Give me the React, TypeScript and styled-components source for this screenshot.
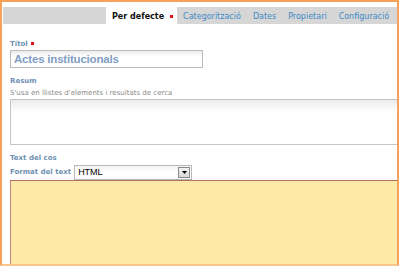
import styled, { createGlobalStyle } from "styled-components";

const Global = createGlobalStyle`
  html, body {
    margin: 0;
    padding: 0;
    background: #ffffff;
  }
`;

const Frame = styled.div`
  width: 399px;
  height: 266px;
  box-sizing: border-box;
  border-top: 2px solid #f7a25a;
  border-left: 2px solid #f7a25a;
  border-right: 2px solid #f7a25a;
  border-bottom: 2px solid #f9c48e;
  overflow: hidden;
  font-family: "DejaVu Sans", Verdana, sans-serif;
`;

const TabBar = styled.div`
  margin: 5px 0 0 1px;
  height: 17px;
  background: #d6d6d6;
  display: flex;
  align-items: stretch;
  padding-left: 103px;
`;

const Tab = styled.div<{ $active?: boolean }>`
  display: flex;
  align-items: center;
  padding: ${(p) => (p.$active ? "1px 4px 0 6px" : "1px 6px 0 6px")};
  font-size: 8px;
  font-weight: ${(p) => (p.$active ? "bold" : "normal")};
  color: ${(p) => (p.$active ? "#111" : "#3f8ac6")};
  background: ${(p) => (p.$active ? "#ffffff" : "transparent")};
  white-space: nowrap;
`;

const Required = styled.span<{ $gap?: number }>`
  display: inline-block;
  width: 3px;
  height: 3px;
  background: #e01010;
  margin-left: ${(p) => p.$gap ?? 6}px;
`;

const Body = styled.div`
  padding: 14px 0 0 8px;
`;

const Label = styled.div`
  font-size: 7px;
  font-weight: bold;
  color: #6f8fb3;
  display: flex;
  align-items: center;
  height: 11px;
`;

const Help = styled.div`
  font-size: 7px;
  color: #8a8a8a;
  margin-top: 1.5px;
  height: 10px;
  line-height: 10px;
`;

const TitleInput = styled.div`
  margin-top: 1px;
  width: 193px;
  height: 18px;
  box-sizing: border-box;
  border: 1px solid #bcbcbc;
  background: linear-gradient(#ececec, #ffffff 40%);
  font-family: "Liberation Sans", Arial, sans-serif;
  font-weight: bold;
  font-size: 11.5px;
  letter-spacing: -0.2px;
  color: #819dc4;
  padding-left: 3px;
  display: flex;
  align-items: center;
`;

const Section = styled.div<{ $gap: number }>`
  margin-top: ${(p) => p.$gap}px;
`;

const TextArea = styled.div`
  margin-top: 1px;
  width: 400px;
  height: 46px;
  box-sizing: border-box;
  border: 1px solid #c4c4c4;
  background: linear-gradient(#ececec, #ffffff 30%);
`;

const FormatRow = styled.div`
  display: flex;
  align-items: center;
  gap: 3px;
  margin-top: 1px;
`;

const Select = styled.div`
  width: 118px;
  height: 15px;
  box-sizing: border-box;
  border: 1px solid #b8b8b8;
  background: linear-gradient(#f2f2f2, #ffffff 50%);
  display: flex;
  align-items: center;
  justify-content: space-between;
  padding: 0 1px 0 3px;
  font-family: "Liberation Sans", Arial, sans-serif;
  font-size: 9px;
  color: #000;
`;

const SelectButton = styled.div`
  width: 12px;
  height: 11px;
  box-sizing: border-box;
  border: 1px solid #8a8a8a;
  background: linear-gradient(#f4f4f4, #d8d8d8);
  display: flex;
  align-items: center;
  justify-content: center;
`;

const Editor = styled.div`
  width: 390px;
  height: 90px;
  box-sizing: border-box;
  border: 1px solid #c98080;
  border-top-color: #b57060;
  background: #feeaa8;
`;

export default function App() {
  return (
    <>
      <Global />
      <Frame>
        <TabBar>
          <Tab $active>
            Per defecte
            <Required />
          </Tab>
          <Tab>Categorització</Tab>
          <Tab>Dates</Tab>
          <Tab>Propietari</Tab>
          <Tab>Configuració</Tab>
        </TabBar>
        <Body>
          <Label>
            Títol
            <Required $gap={3} />
          </Label>
          <TitleInput>Actes institucionals</TitleInput>
          <Section $gap={7}>
            <Label>Resum</Label>
            <Help>S'usa en llistes d'elements i resultats de cerca</Help>
            <TextArea />
          </Section>
          <Section $gap={8}>
            <Label>Text del cos</Label>
            <FormatRow>
              <Label>Format del text</Label>
              <Select>
                HTML
                <SelectButton>
                  <svg width="5" height="3" viewBox="0 0 5 3">
                    <path d="M0 0h5L2.5 3z" fill="#000" />
                  </svg>
                </SelectButton>
              </Select>
            </FormatRow>
            <Editor />
          </Section>
        </Body>
      </Frame>
    </>
  );
}
